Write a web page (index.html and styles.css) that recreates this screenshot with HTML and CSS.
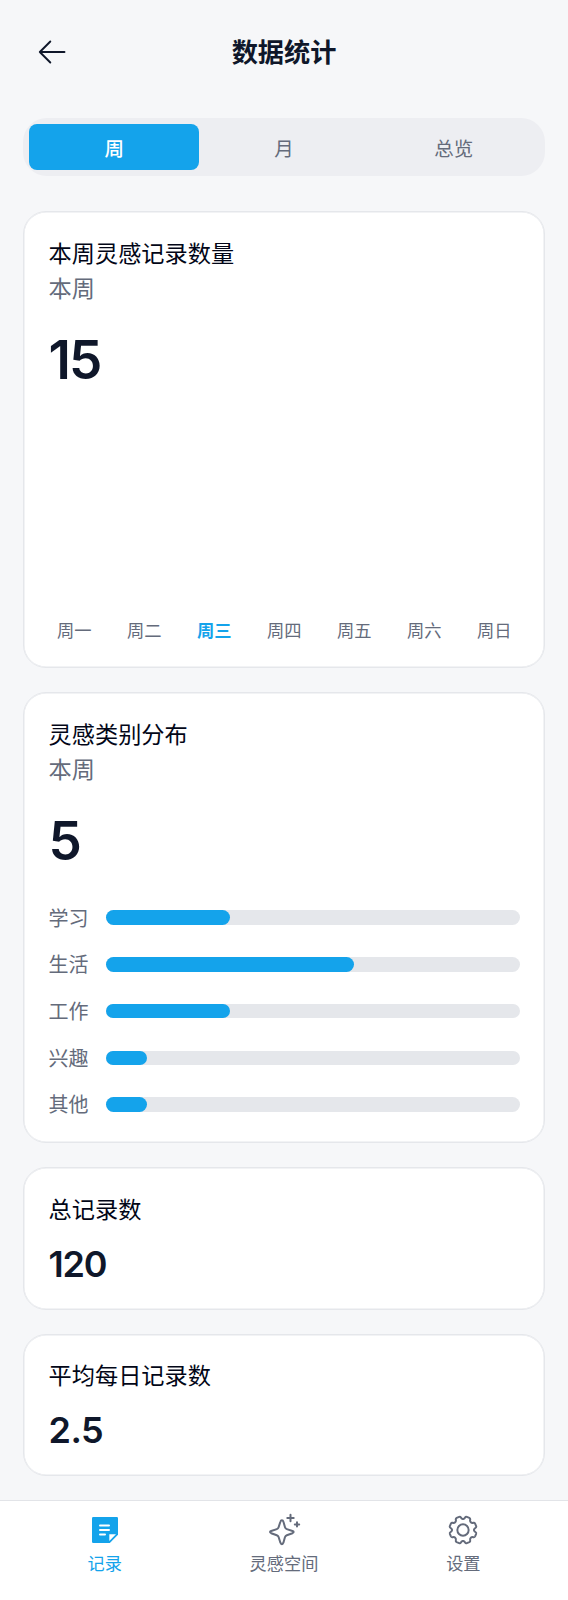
FILE: index.html
```html
<!DOCTYPE html>
<html lang="zh-CN">
<head>
<meta charset="utf-8">
<meta name="viewport" content="width=device-width, initial-scale=1">
<title>数据统计</title>
<link rel="stylesheet" href="styles.css">
</head>
<body>
<div class="page">
  <header class="header">
    <svg class="back" viewBox="0 0 28 28" fill="none" stroke="currentColor" stroke-width="1.9" stroke-linecap="round" stroke-linejoin="round"><path d="M26.500 14H1.800M12.300 3.500 1.800 14l10.500 10.500"/></svg>
    <h1 class="title">数据统计</h1>
  </header>
  <main class="main">
    <div class="tabs">
      <button class="tab tab-active">周</button>
      <button class="tab">月</button>
      <button class="tab">总览</button>
    </div>
    <section class="card card-week">
      <h2 class="card-title">本周灵感记录数量</h2>
      <p class="card-sub">本周</p>
      <p class="big">15</p>
      <div class="chart"></div>
      <div class="days">
        <span>周一</span><span>周二</span><span class="today">周三</span><span>周四</span><span>周五</span><span>周六</span><span>周日</span>
      </div>
    </section>
    <section class="card card-types">
      <h2 class="card-title">灵感类别分布</h2>
      <p class="card-sub">本周</p>
      <p class="big">5</p>
      <div class="rows">
        <div class="row"><span class="label">学习</span><div class="track"><div class="fill" style="width:30%"></div></div></div>
        <div class="row"><span class="label">生活</span><div class="track"><div class="fill" style="width:60%"></div></div></div>
        <div class="row"><span class="label">工作</span><div class="track"><div class="fill" style="width:30%"></div></div></div>
        <div class="row"><span class="label">兴趣</span><div class="track"><div class="fill" style="width:10%"></div></div></div>
        <div class="row"><span class="label">其他</span><div class="track"><div class="fill" style="width:10%"></div></div></div>
      </div>
    </section>
    <section class="card card-stat">
      <h2 class="card-title">总记录数</h2>
      <p class="stat">120</p>
    </section>
    <section class="card card-stat">
      <h2 class="card-title">平均每日记录数</h2>
      <p class="stat stat-wide">2.5</p>
    </section>
  </main>
  <nav class="nav">
    <a class="nav-item nav-active">
      <svg class="icon" viewBox="0 0 36 36"><path fill="currentColor" d="M6.200 5H29.800Q31 5 31 6.200V22.800L22.800 31H6.200Q5 31 5 29.800V6.200Q5 5 6.200 5Z"/><path fill="#fff" d="M22.300 22.300H29L22.300 29Z"/><path fill="none" stroke="#fff" stroke-width="2" stroke-linecap="round" d="M13 13.500H22M13 18H22M13 22.500H18"/></svg>
      <span>记录</span>
    </a>
    <a class="nav-item">
      <svg class="icon" viewBox="0 0 36 36" fill="none" stroke="currentColor" stroke-width="2" stroke-linecap="round" stroke-linejoin="round"><path d="M15.900 8.300Q17 8.300 17.500 10L19 15.200Q19.400 16.600 20.800 17.100L26.500 19Q28.800 20 26.500 21.200L20.800 23.200Q19.500 23.700 19 25L17.400 30.700Q15.900 34 14.400 30.700L12.600 25Q12.200 23.700 10.800 23.200L5.200 21.200Q2.800 20 5.200 19L10.800 17.100Q12.200 16.600 12.600 15.200L14.300 10Q14.800 8.300 15.900 8.300Z"/><path d="M24.500 2.800V9.200M21.300 6H27.700M31 10.200V14.600M28.800 12.400H33.200"/></svg>
      <span>灵感空间</span>
    </a>
    <a class="nav-item">
      <svg class="icon" viewBox="0 0 36 36" fill="none" stroke="currentColor" stroke-width="2.050" stroke-linecap="round" stroke-linejoin="round">
        <defs><path id="cog-quarter" d="M18 6.500Q19.500 6.500 20.200 5Q20.800 3.900 22 4.300L24.600 5.400Q25.800 6 25.500 7.200Q25 8.800 26.100 9.900Q27.200 11 28.800 10.500Q30 10.200 30.600 11.400L31.700 14Q32.100 15.200 31 15.800Q29.500 16.500 29.500 18"/></defs>
        <g transform="translate(18 18) scale(.960) translate(-18 -18)">
          <use href="#cog-quarter"/>
          <use href="#cog-quarter" transform="rotate(90 18 18)"/>
          <use href="#cog-quarter" transform="rotate(180 18 18)"/>
          <use href="#cog-quarter" transform="rotate(270 18 18)"/>
          <circle cx="18" cy="18" r="5.900"/>
        </g>
      </svg>
      <span>设置</span>
    </a>
  </nav>
</div>
</body>
</html>
```
FILE: styles.css
```css
* { box-sizing: border-box; margin: 0; padding: 0; }
body {
  background: #f6f7f9;
  color: #0f172a;
  font-family: Inter, "Noto Sans CJK SC", sans-serif;
}
.page { height: 1600px; display: flex; flex-direction: column; }
.header {
  height: 118.300px;
  padding: 38px 38px 0;
  display: grid;
  grid-template-columns: 28px 1fr 28px;
  align-items: start;
}
.back { width: 28px; height: 28px; }
.title { font-size: 26.200px; line-height: 30px; font-weight: 700; text-align: center; }
.main { flex: 1; padding: 0 23.400px; display: flex; flex-direction: column; }
.tabs {
  height: 58px;
  padding: 6px;
  border-radius: 24px;
  background: #edeef2;
  display: grid;
  grid-template-columns: repeat(3, 1fr);
  margin-bottom: 35.200px;
}
.tab {
  border: 0;
  border-radius: 8px;
  background: none;
  color: #646b7b;
  font: inherit;
  font-size: 19.500px;
}
.tab-active { background: #14a3eb; color: #fff; font-weight: 500; }
.card {
  flex-shrink: 0;
  background: #fff;
  border: 1px solid #e5e7eb;
  box-shadow: inset 0 0 0 .500px #e5e7eb;
  border-radius: 23px;
  padding: 24.300px 23.600px 23px 24.200px;
  margin-bottom: 24px;
}
.card-week { height: 457px; display: flex; flex-direction: column; }
.card-types { height: 451px; }
.card-stat { height: 142.300px; }
.card-title { font-size: 23.200px; line-height: 35px; font-weight: 400; color: #020617; }
.card-sub { font-size: 23.200px; line-height: 35px; color: #646b7b; }
.big { font-size: 53px; line-height: 64px; font-weight: 600; margin-top: 21px; letter-spacing: -2px; }
.chart { flex: 1; }
.days {
  display: grid;
  grid-template-columns: repeat(7, 1fr);
  gap: 18.500px;
  font-size: 17.300px;
  line-height: 26px;
  text-align: center;
  color: #646b7b;
  white-space: nowrap;
}
.today { color: #14a3eb; font-weight: 700; }
.rows { margin-top: 30px; display: flex; flex-direction: column; gap: 16.700px; }
.row { height: 30px; display: flex; align-items: center; }
.label { width: 57.500px; font-size: 20px; line-height: 30px; padding-top: 2px; color: #646b7b; }
.track { flex: 1; height: 14.500px; border-radius: 8px; background: #e5e7eb; }
.fill { height: 100%; border-radius: 8px; background: #14a3eb; }
.stat { font-size: 36px; line-height: 44px; font-weight: 600; margin-top: 14px; letter-spacing: -1.200px; }
.stat-wide { letter-spacing: -.600px; }
.nav {
  height: 100px;
  flex-shrink: 0;
  background: #fff;
  border-top: 1px solid #e2e4e8;
  padding: 11px 15px 0;
  display: grid;
  grid-template-columns: repeat(3, 1fr);
}
.nav-item { display: flex; flex-direction: column; align-items: center; gap: 3px; color: #646b7b; font-size: 17.200px; line-height: 26px; }
.nav-active { color: #14a3eb; }
.icon { width: 36px; height: 36px; }
```
